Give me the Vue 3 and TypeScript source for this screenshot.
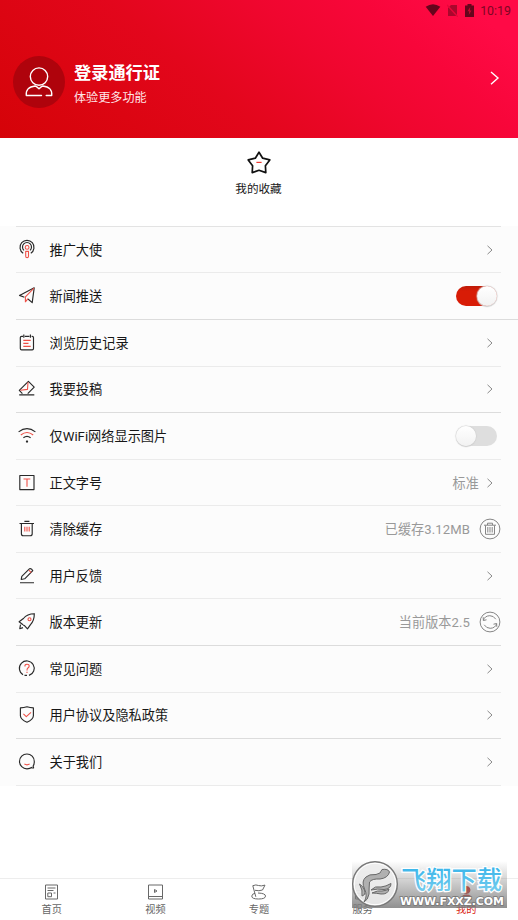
<script setup lang="ts">
import { ref } from 'vue'

interface Row {
  label: string
  dark: string
  red: string
  kind: 'arrow' | 'switch' | 'trash' | 'refresh'
  value?: string
  wide?: boolean
  on?: boolean
}

const rows = ref<Row[]>([
  {
    label: '推广大使',
    dark: 'M8.2 15.2A7 7 0 1 1 15.8 15.2M9 12.4A4.5 4.5 0 1 1 15 12.4',
    red: 'M10.7 13.4H13.5V18.2Q13.5 19.6 12.1 19.6Q10.7 19.6 10.7 18.2ZM10.2 9.4A1.9 1.9 0 1 1 14 9.4A1.9 1.9 0 1 1 10.2 9.4',
    kind: 'arrow',
  },
  {
    label: '新闻推送',
    dark: 'M9.4 13.2L4.5 11.4L19.2 3.8L17.2 18.6L13 15',
    red: 'M19 4.2L10.4 12.8V18.2M13 14.6L10.4 17.8',
    kind: 'switch',
    on: true,
    wide: true,
  },
  {
    label: '浏览历史记录',
    dark: 'M8 5.3H6.6Q5.3 5.3 5.3 6.6V17.6Q5.3 18.9 6.6 18.9H17.2Q18.5 18.9 18.5 17.6V6.6Q18.5 5.3 17.2 5.3H16.6M9.8 5.3H14.4M8.8 3.6V6.8M15.4 3.6V6.8',
    red: 'M8.3 9.4H15.7M8.3 12.4H13.5M8.3 15.4H15.7',
    kind: 'arrow',
  },
  {
    label: '我要投稿',
    dark: 'M4.2 17.8H19.3M7.4 16.7L4.3 13.4L13.4 4.4L19.2 10.2L12.7 16.7',
    red: 'M13 5.2L12.5 12.4L5.4 13.3',
    kind: 'arrow',
  },
  {
    label: '仅WiFi网络显示图片',
    dark: 'M3.6 7.9Q12 1.4 20.4 7.9M8.4 13.8Q12 10.8 15.6 13.8M11.5 17H12.5V18H11.5Z',
    red: 'M5.8 11Q12 6 18.2 11',
    kind: 'switch',
    on: false,
  },
  {
    label: '正文字号',
    dark: 'M4.8 4.5H19V18.6H4.8Z',
    red: 'M8.5 8H15.3M12 8V15.7',
    kind: 'arrow',
    value: '标准',
  },
  {
    label: '清除缓存',
    dark: 'M4.5 6.5H19M9.4 4.3H14.4M6.4 6.7V16.7Q6.4 18.7 8.4 18.7H15.2Q17.2 18.7 17.2 16.7V6.7',
    red: 'M9.8 9.8V14.4M12 9.8V14.4M14.2 9.8V14.4',
    kind: 'trash',
    value: '已缓存3.12MB',
  },
  {
    label: '用户反馈',
    dark: 'M5 18.7H19M6.2 15.5L6.8 12.3L14.6 4.7Q16.6 4 17.8 6.7L9.7 14.8Z',
    red: 'M13.8 6.2L16.3 8.7',
    kind: 'arrow',
  },
  {
    label: '版本更新',
    dark: 'M8 14.7L4.1 11.8L8.4 8.5Q12.2 3.8 19.3 3.7Q19.4 10.3 15.5 14.6L12.5 18.9L9.7 15.8L8.2 15M5.5 14.7L4.8 18.7L8 17.6',
    red: 'M13 9.2A1.5 1.5 0 1 1 16 9.2A1.5 1.5 0 1 1 13 9.2',
    kind: 'refresh',
    value: '当前版本2.5',
  },
  {
    label: '常见问题',
    dark: 'M8 17.7A7.4 7.4 0 1 1 14 18.4M9.5 18.4H12',
    red: 'M9.9 9.4Q9.8 7.2 12 7.2Q14.2 7.2 14.2 9.1Q14.2 10.3 12.7 11.2Q12 11.8 12 13.4M12 14.8V16',
    kind: 'arrow',
  },
  {
    label: '用户协议及隐私政策',
    dark: 'M5.4 4.9Q9 4.9 12 3.8Q15 4.9 18.4 4.9V12.7Q18.2 16.5 12 19.2Q5.6 16.5 5.4 12.7Z',
    red: 'M8.4 10.8L11.3 13.6L16 9.4',
    kind: 'arrow',
  },
  {
    label: '关于我们',
    dark: 'M17 17.3Q15 18.8 12 18.8A7.4 7.4 0 1 1 19.3 11.5Q19.3 14.6 18.1 16L18.6 18H16.5',
    red: 'M9.4 14.1Q12 15.6 14.6 14.1',
    kind: 'arrow',
  },
])

const tabs = [
  { label: '首页', d: 'M5.5 4H17.5V18H5.5ZM7.5 7H15.5M7.5 9.5H13.5M7.8 12H11.5V15.7H7.8ZM13.5 12H15.5' },
  { label: '视频', d: 'M4.5 4H18.5V18H4.5ZM4.5 15.5H18.5M10.5 8.5L13 10L10.5 11.5Z' },
  { label: '专题', d: 'M8.8 15.8L5.8 4.7Q9 3.3 11.5 4.5Q14 5.5 18 4.1L15.5 9Q12 10.3 8 9.3M11 12Q18.5 12.3 18.5 15.1Q18.5 18 11.5 18Q4.5 18 4.8 15Q5 12.8 8 12.3' },
  { label: '服务', d: 'M4.5 4H10V9.5H4.5ZM13 4H18.5V9.5H13ZM4.5 12.5H10V18H4.5ZM13 12.5H18.5V18H13Z' },
  { label: '我的', d: 'M11.5 5A4 4 0 1 1 11.4 5M6 18.5Q6 13.5 11.5 13.5Q17 13.5 17 18.5Z', active: true },
]
</script>

<template>
  <main class="screen">
    <header class="hero">
      <div class="status">
        <svg width="16" height="14" viewBox="0 0 16 14"><path d="M0.7 3.8Q8 -1.2 15.3 3.8L8 13Z" /></svg>
        <svg class="sim" width="11" height="13" viewBox="0 0 11 13"><path d="M4 1H10V12H1V4Z" opacity=".55" /><path d="M0 1L11 13" stroke="#e8063a" stroke-width="1.4" /></svg>
        <svg width="9" height="13" viewBox="0 0 9 13"><path d="M0 1.6H2.5V0H6.5V1.6H9V13H0Z" /><path d="M5.2 3L2.5 7.3H4.2L3.8 11L6.5 6.5H4.9Z" fill="#c5082f" /></svg>
        <span class="time">10:19</span>
      </div>
      <div class="account">
        <div class="avatar">
          <svg width="32" height="32" viewBox="0 0 32 32">
            <circle cx="16" cy="10.6" r="8.7" />
            <path d="M18.5 29.5H3.3Q2.4 21 12.2 20Q13.2 20 16 22.8Q18.8 20 19.8 20Q29.6 21 28.7 29.5H23.2" />
          </svg>
        </div>
        <div class="names">
          <div class="title">登录通行证</div>
          <div class="sub">体验更多功能</div>
        </div>
        <svg class="go" width="12" height="16" viewBox="0 0 12 16"><path d="M2 2L9 8L2 14.2" /></svg>
      </div>
    </header>

    <section class="favorite">
      <svg width="26" height="26" viewBox="0 0 26 26">
        <path d="M13 2.2L16.7 8.2L23.8 9.9L19.4 15.7L19.8 22.6L13 20.3L6.2 22.6L6.6 15.7L2.2 9.9L9.3 8.2Z" />
        <path class="dash" d="M10.4 12.4H15.6" />
      </svg>
      <span>我的收藏</span>
    </section>

    <section class="list">
      <div v-for="row in rows" :key="row.label" class="row" :class="{ wide: row.wide }">
        <svg class="icon" width="24" height="24" viewBox="0 0 24 24">
          <path :d="row.dark" />
          <path class="red" :d="row.red" />
        </svg>
        <span class="label">{{ row.label }}</span>
        <span v-if="row.value" class="value" :class="{ near: row.kind === 'arrow' }">{{ row.value }}</span>
        <svg v-if="row.kind === 'arrow'" class="arrow" width="8" height="12" viewBox="0 0 8 12"><path d="M1.5 1.8L6 6L1.5 10.2" /></svg>
        <button v-else-if="row.kind === 'switch'" class="switch" :class="{ on: row.on }" @click="row.on = !row.on"><i></i></button>
        <svg v-else class="round" width="22" height="22" viewBox="0 0 22 22">
          <circle cx="11" cy="11" r="9.9" />
          <path v-if="row.kind === 'trash'" d="M5 7.2H17M8.5 7V5.2H13.5V7M6.5 7.4V16.3H15.5V7.4M8.8 9V14.5M11 9V14.5M13.2 9V14.5" />
          <path v-else d="M4.4 9.3Q5.6 4.9 10.8 4.7Q14.6 4.7 16.8 8.2M4.2 6.2L4.4 9.5L7.5 8.8M17.6 12.7Q16.4 17.1 11.2 17.3Q7.4 17.3 5.2 13.8M17.8 15.8L17.6 12.5L14.5 13.2" />
        </svg>
      </div>
    </section>

    <nav class="tabs">
      <div v-for="tab in tabs" :key="tab.label" class="tab" :class="{ active: tab.active }">
        <svg width="23" height="21" viewBox="0 0 23 21"><path :d="tab.d" /></svg>
        <span>{{ tab.label }}</span>
      </div>
    </nav>

    <div class="mark">
      <svg class="emblem" width="48" height="48" viewBox="0 0 48 48">
        <circle cx="24" cy="24" r="22.3" fill="#ededed" fill-opacity=".92" stroke="#777" stroke-width="1.4" />
        <circle cx="24" cy="24" r="20.7" fill="none" stroke="#fff" stroke-width="1" />
        <path d="M13 42Q17 36 13.5 29Q10 21 15 17Q18 14 25 14.5Q30 14 31 9.5Q37 8.5 38.5 12Q37 18 29 19Q21 18.5 18.5 22Q18 28 18 34Q17 40 13 42Z" />
        <path d="M11 36Q12 30 8.5 24Q12 26 13.5 30Q15 35 11 36ZM20 30Q24 25.5 30 27Q35 26.5 40 23.5Q40 29 33 29.5Q27 28.5 20 30ZM21 33Q27 30 31 31Q36 30.5 38 29Q37 34.5 30 34Q25 33 21 33Z" />
      </svg>
      <svg class="words" width="108" height="46" viewBox="0 0 108 46">
        <defs>
          <linearGradient id="sky" x1="0" y1="0" x2="0" y2="1">
            <stop offset="0.2" stop-color="#37b4ea" />
            <stop offset="1" stop-color="#7fd0ee" />
          </linearGradient>
        </defs>
        <text class="brand" x="2" y="27.5" textLength="101" lengthAdjust="spacingAndGlyphs" fill="url(#sky)">飞翔下载</text>
        <text class="site" x="1" y="43.5" textLength="104" lengthAdjust="spacingAndGlyphs">WWW.FXXZ.COM</text>
      </svg>
    </div>
  </main>
</template>

<style>
body {
  margin: 0;
  background: #fff;
}
</style>

<style scoped>
.screen {
  position: relative;
  display: flex;
  flex-direction: column;
  width: 518px;
  height: 920px;
  overflow: hidden;
  box-sizing: border-box;
  background: #fff;
  color: #171717;
  font-family: Roboto, "Noto Sans CJK SC", sans-serif;
}
svg {
  display: block;
  flex: none;
}
.hero {
  height: 138px;
  background: linear-gradient(40deg, #d50308 0%, #dc0512 22%, #e3061c 40%, #f0062f 62%, #f8063a 77%, #ff0a46 92%);
}
.status {
  display: flex;
  align-items: center;
  height: 20px;
  padding: 0 7px 0 0;
  justify-content: flex-end;
  fill: #65051c;
  color: #7d0624;
}
.sim {
  margin-left: 6px;
  margin-right: 7px;
}
.time {
  margin-left: 6px;
  font-size: 12.4px;
  line-height: 20px;
  padding-top: 1px;
}
.account {
  display: flex;
  align-items: center;
  height: 52px;
  margin-top: 36px;
  padding: 0 17px 0 13px;
}
.avatar {
  display: flex;
  align-items: center;
  justify-content: center;
  width: 52px;
  height: 52px;
  border-radius: 50%;
  background: #af030c;
}
.avatar svg {
  fill: none;
  stroke: #fff;
  stroke-width: 1.4;
  stroke-linecap: round;
  stroke-linejoin: round;
}
.names {
  margin-left: 9px;
  padding-top: 5px;
  flex: 1;
  color: #fff;
}
.title {
  font-size: 17.2px;
  line-height: 25px;
  font-weight: 700;
  margin-top: 3px;
}
.sub {
  font-size: 12.1px;
  line-height: 25px;
  color: #ffe5e7;
}
.go {
  fill: none;
  stroke: #fff;
  stroke-width: 1.4;
  margin-top: -8px;
}
.favorite {
  display: flex;
  flex-direction: column;
  align-items: center;
  height: 88px;
  padding-top: 12px;
  box-sizing: border-box;
  font-size: 11.6px;
  line-height: 18px;
  gap: 4px;
}
.favorite svg {
  fill: none;
  stroke: #111;
  stroke-width: 1.7;
  stroke-linejoin: round;
}
.favorite span {
  margin-left: -1px;
}
.favorite .dash {
  stroke: #ef3a32;
  stroke-width: 1.2;
}
.list {
  margin-top: -0.1px;
  border-top: 1px solid transparent;
  background: linear-gradient(#e3e3e3, #e3e3e3) 16px 0 / 485px 1px no-repeat border-box, #fcfcfc;
}
.row {
  display: flex;
  align-items: center;
  box-sizing: border-box;
  height: 46.57px;
  margin: 0 17px 0 16px;
  border-bottom: 1px solid #ebebeb;
}
.row:nth-child(2),
.row:nth-child(4),
.row:nth-child(9),
.row:nth-child(11) {
  border-bottom-color: #dcdcdc;
}
.row.wide {
  margin-right: 0;
  padding-right: 17px;
}
.icon {
  margin-left: -1px;
  fill: none;
  stroke: #292929;
  stroke-width: 1.15;
  stroke-linejoin: round;
}
.icon .red {
  stroke: #ee5148;
  stroke-width: 1.1;
}
.label {
  flex: 1;
  margin-left: 10.5px;
  font-size: 13.2px;
  line-height: 20px;
  padding-top: 2px;
  white-space: nowrap;
}
.value {
  font-size: 13.1px;
  line-height: 20px;
  padding-top: 2px;
  color: #999;
  margin-right: 9px;
  letter-spacing: 0.1px;
}
.value.near {
  margin-right: 7px;
}
.arrow {
  fill: none;
  stroke: #8b8b8b;
  stroke-width: 1;
  margin-right: 7px;
}
.switch {
  display: flex;
  width: 41px;
  height: 20px;
  margin-right: 4px;
  padding: 0;
  border: 0;
  border-radius: 10px;
  background: #dedede;
}
.switch i {
  width: 20px;
  height: 20px;
  border-radius: 50%;
  background: linear-gradient(#fff, #f2f2f2);
  box-shadow: 0 0 1px 0.5px #cfcfcf, 0 1px 1px #cfcfcf;
}
.switch.on {
  justify-content: flex-end;
  background: linear-gradient(#bd1b08, #d81c06 25%);
}
.round {
  fill: none;
  stroke: #858585;
  stroke-width: 1;
}
.tabs {
  display: flex;
  height: 42px;
  margin-top: auto;
  border-top: 1px solid #ededed;
  box-sizing: border-box;
}
.tab {
  flex: 1;
  display: flex;
  flex-direction: column;
  align-items: center;
  padding-top: 2px;
  font-size: 10.2px;
  line-height: 14px;
  gap: 1px;
  color: #666;
}
.tab svg {
  fill: none;
  stroke: #686868;
  stroke-width: 1;
}
.tab.active {
  color: #d9200d;
}
.tab.active svg {
  fill: #c92825;
  stroke: none;
}
.mark {
  position: absolute;
  left: 352px;
  top: 861px;
  width: 155px;
  height: 47px;
  display: flex;
  background: linear-gradient(rgba(160, 160, 160, 0), rgba(125, 125, 125, 0.85));
}
.emblem {
  fill: #b0b0b0;
  stroke: #686868;
  stroke-width: 1;
  margin: -1px 0 0 -1px;
}
.words {
  overflow: visible;
}
.brand {
  font: 500 25.5px "Noto Sans CJK SC", sans-serif;
  stroke: #fff;
  stroke-width: 2.5px;
  paint-order: stroke;
}
.site {
  font: 700 10.5px "DejaVu Sans", sans-serif;
  fill: #fff;
  stroke: #777;
  stroke-width: 1.5px;
  paint-order: stroke;
}
</style>
